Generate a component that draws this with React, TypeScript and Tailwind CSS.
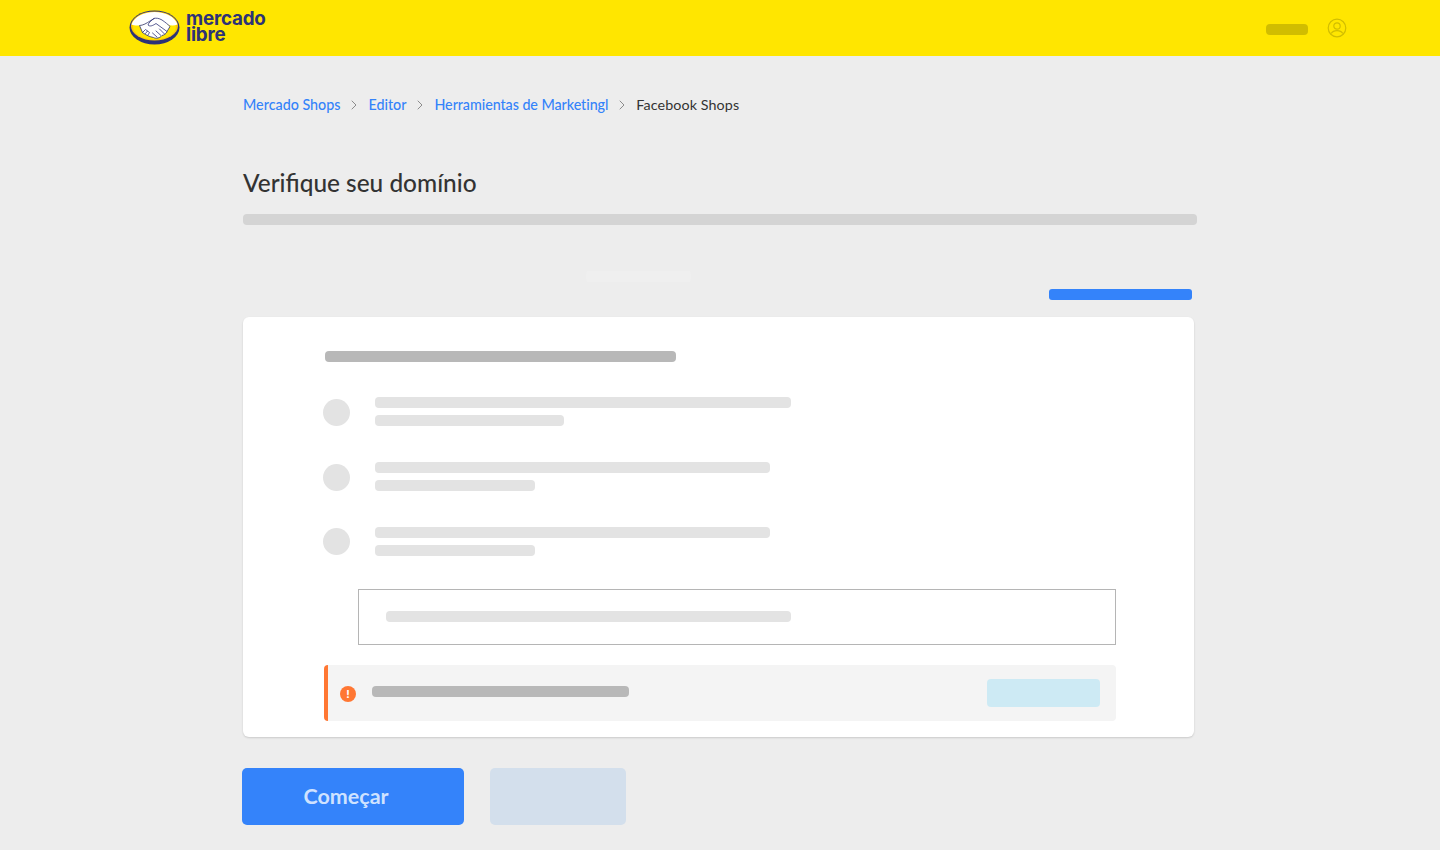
import { ChevronRight } from 'lucide-react';

const font = { fontFamily: '"Lato", "Open Sans", sans-serif' };

function Logo() {
  return (
    <div className="flex items-center gap-[6px]">
      <svg width="51" height="36" viewBox="0 0 51 36" fill="none">
        <ellipse cx="25.5" cy="17.5" rx="25" ry="17" fill="#2d3277" />
        <ellipse cx="25.5" cy="16" rx="23.5" ry="14.5" fill="#ffc800" />
        <ellipse cx="25.5" cy="16.5" rx="21.5" ry="13" fill="#ffe600" />
        {/* top band */}
        <path d="M2.5 14.5C5 7 14 2 25.5 2S46 7 48.5 14.5C43 16.5 38 15 33 11.5L24 10C18 13 14 15.5 10 15.5 7 15.8 4.5 15.3 2.5 14.5Z" fill="#fff" />
        {/* hands */}
        <path d="M10.5 15.5C14 15.5 18 13 21 11L25 8.5C27 7.8 30 8.2 33 10 36 12 39 14.5 41 16.5L38 21.5C37 24 35 25 33 25.5 31 28 27 29 24.5 27.5 21 27 17 25 13.5 22.5Z" fill="#fff" stroke="#2d3277" strokeWidth="0.8" strokeLinejoin="round" />
        <path d="M25 8.5C22 10.5 19.5 13 19 15 21 17 24 15.5 27 13.5L38 21.5M30.5 19L35.5 24M27 21L32 25.5M23.5 23L28 27M13.5 22.5L16.5 19.5 18.5 21 16.5 23.5M18.5 21L20.5 22.5 19 25" stroke="#2d3277" strokeWidth="0.8" strokeLinecap="round" strokeLinejoin="round" />
      </svg>
      <div className="text-[#2d3277] text-[18.8px] font-bold leading-[16px] tracking-[-0.2px] -mt-[3px]" style={{ fontFamily: '"Inter", sans-serif' }}>
        <div>mercado</div>
        <div>libre</div>
      </div>
    </div>
  );
}

function Sep() {
  return <ChevronRight className="w-4 h-4 text-[#8c8c8c] mx-[6px]" strokeWidth={1.5} />;
}

function Step({ first, second, circle }: { first: string; second: string; circle: string }) {
  return (
    <div className="flex">
      <div className={`w-[27px] h-[27px] rounded-full bg-[#e3e3e3] ${circle}`} />
      <div className="ml-[25px] flex flex-col gap-[7px]">
        <div className={`h-[11px] rounded-[4px] bg-[#e3e3e3] ${first}`} />
        <div className={`h-[11px] rounded-[4px] bg-[#e3e3e3] ${second}`} />
      </div>
    </div>
  );
}

export default function App() {
  return (
    <div className="h-[850px] overflow-hidden bg-[#ededed]" style={font}>
      <header className="h-14 bg-[#ffe600] flex items-center pl-[129px] pr-[93px] justify-between">
        <Logo />
        <div className="flex items-center gap-[19px]">
          <div className="w-[42px] h-[11px] rounded-[4px] bg-[#d1bd00] mt-[3px]" />
          <svg width="20" height="20" viewBox="0 0 20 20" fill="none" stroke="#d1bd00" strokeWidth="1.2">
            <circle cx="10" cy="10" r="8.8" />
            <circle cx="10" cy="8" r="3.2" />
            <path d="M4.2 15.5C5.5 13.2 7.5 12.6 10 12.6S14.5 13.2 15.8 15.5" />
          </svg>
        </div>
      </header>

      <main className="pl-[243px]">
        <nav className="flex items-center text-[14.3px] font-medium leading-[18px] pt-[40px] text-[#3483fa]">
          <span>Mercado Shops</span>
          <Sep />
          <span>Editor</span>
          <Sep />
          <span className="tracking-[-0.06px]">Herramientas de Marketingl</span>
          <Sep />
          <span className="text-[#333333] font-normal tracking-[0.1px]">Facebook Shops</span>
        </nav>

        <h1 className="text-[24.4px] leading-[30px] font-medium text-[#333333] mt-[54px]">Verifique seu domínio</h1>
        <div className="w-[954px] h-[11px] rounded-[4px] bg-[#d4d4d4] mt-[16px]" />

        <div className="w-[105px] h-[11px] rounded-[3px] bg-[#efefef] ml-[343px] mt-[46px]" />
        <div className="w-[143px] h-[11px] rounded-[3px] bg-[#3483fa] ml-[806px] mt-[7px]" />

        <section className="w-[951px] h-[420px] rounded-[6px] bg-white shadow-[0_1px_2px_rgba(0,0,0,0.15)] mt-[17px] pl-[80px] pt-[34px]">
          <div className="w-[351px] h-[11px] rounded-[4px] bg-[#b8b8b8] ml-[2px]" />
          <div className="flex flex-col gap-[36px] mt-[35px]">
            <Step first="w-[416px]" second="w-[189px]" circle="mt-[2px]" />
            <Step first="w-[395px]" second="w-[160px]" circle="mt-[2px]" />
            <Step first="w-[395px]" second="w-[160px]" circle="mt-[1px]" />
          </div>
          <div className="w-[758px] h-[56px] border border-[#b5b5b5] ml-[35px] mt-[33px] flex items-center pl-[27px] pb-[2px]">
            <div className="w-[405px] h-[11px] rounded-[4px] bg-[#e3e3e3]" />
          </div>
          <div className="w-[792px] h-[56px] ml-[1px] mt-[20px] rounded-[4px] bg-[#f4f4f4] border-l-4 border-[#ff7733] flex items-center pl-[12px] pr-[16px]">
            <div className="w-4 h-4 rounded-full bg-[#ff7733] text-white flex items-center justify-center text-[12px] font-black leading-none mt-px">!</div>
            <div className="w-[257px] h-[11px] rounded-[4px] bg-[#b8b8b8] ml-[16px] -mt-[3px]" />
            <div className="w-[113px] h-[28px] rounded-[4px] bg-[#cdeaf4] ml-auto" />
          </div>
        </section>

        <div className="flex gap-[26px] mt-[31px] -ml-px">
          <button className="w-[222px] h-[57px] rounded-[5px] bg-[#3483fa] text-[#cfe2ff] text-[21.5px] font-bold pr-[14px]">Começar</button>
          <div className="w-[136px] h-[57px] rounded-[5px] bg-[#d3dfec]" />
        </div>
      </main>
    </div>
  );
}
